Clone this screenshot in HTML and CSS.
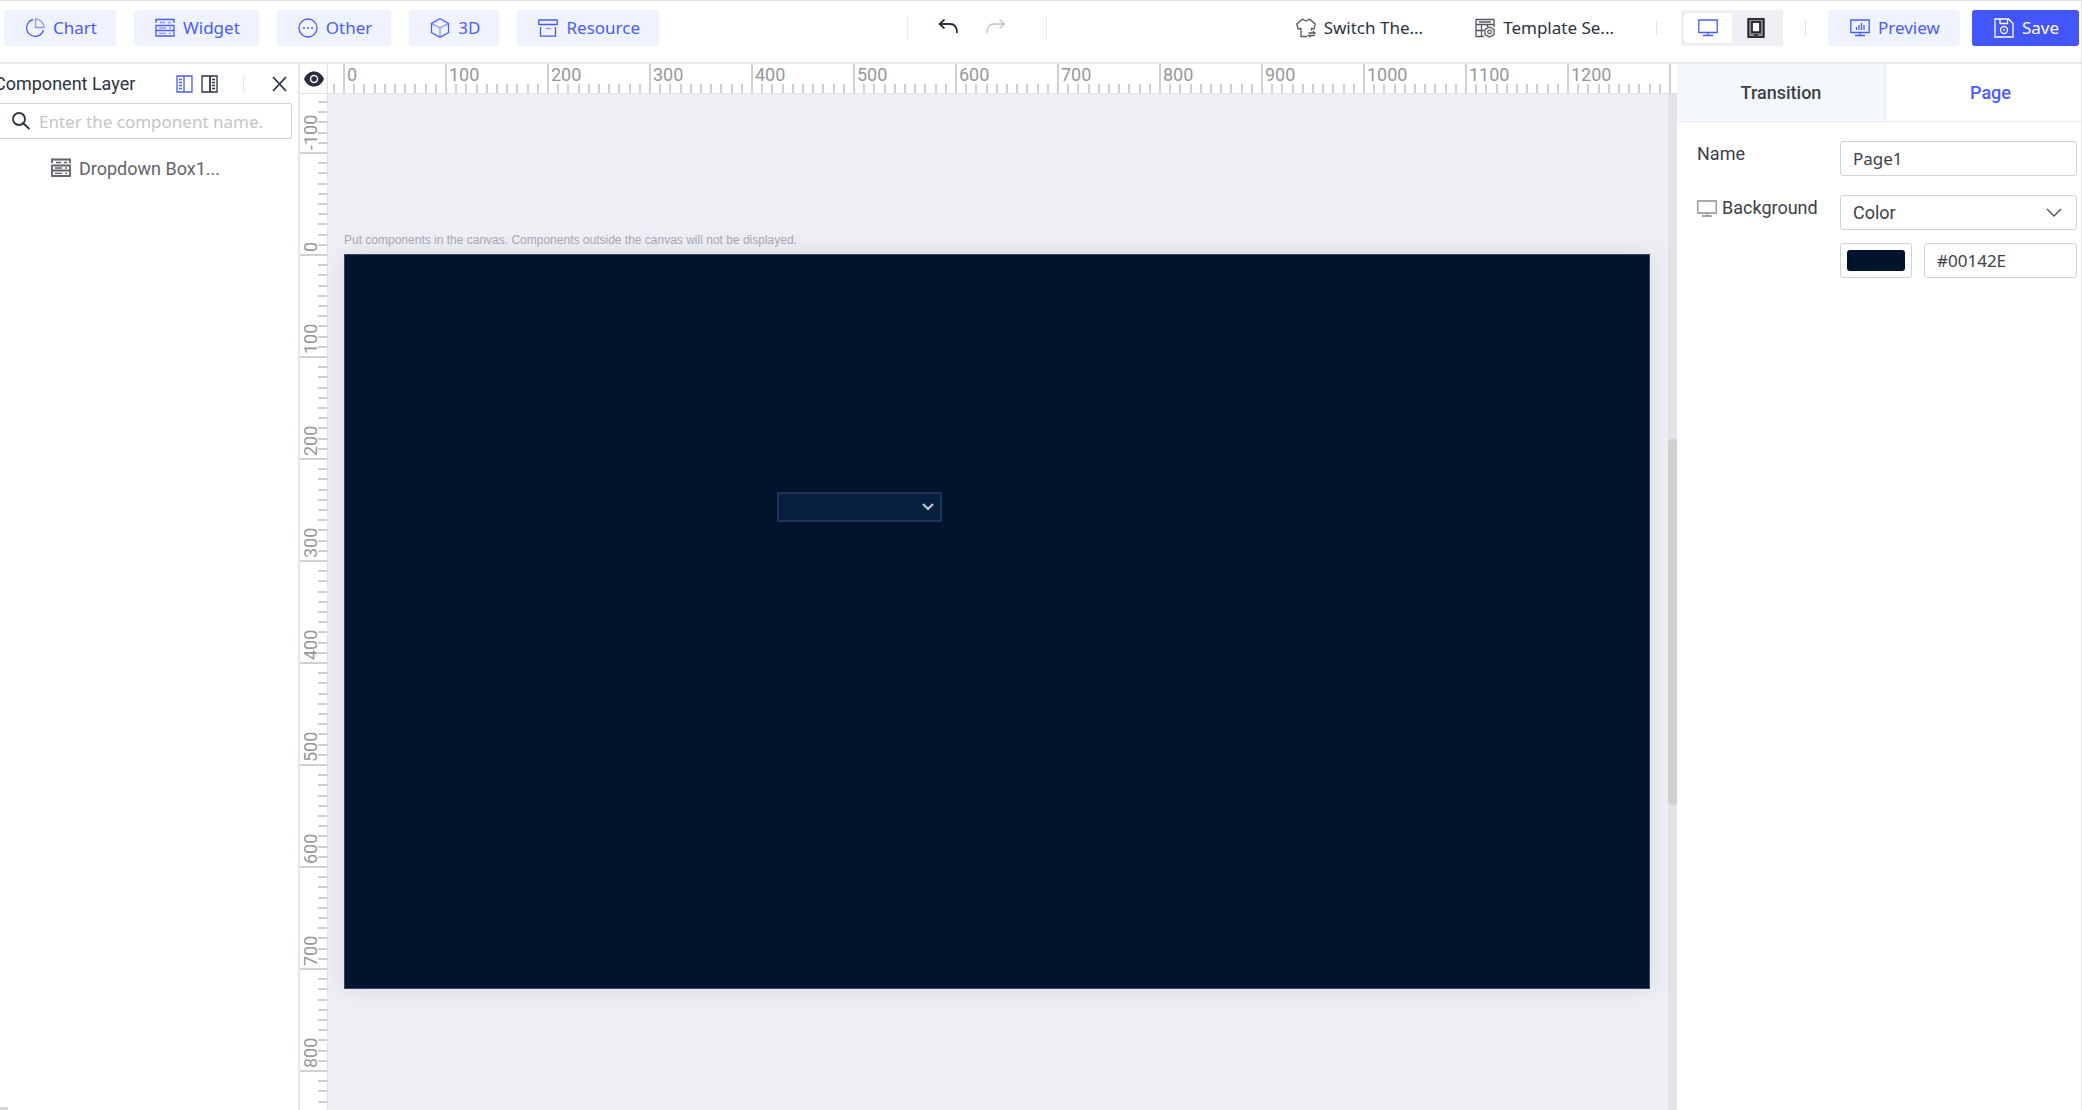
FILE: index.html
```html
<!DOCTYPE html>
<html lang="en">
<head>
  <meta charset="UTF-8">
  <meta name="viewport" content="width=device-width, initial-scale=1.0">
  <title>Page Editor</title>
  <link rel="stylesheet" href="styles.css">
</head>
<body>
  <header class="toolbar">
    <nav class="group component-menu">
      <button type="button" class="btn">
        <svg class="icon" viewBox="0 0 20 20"><path d="M8 1.500A8.600 8.600 0 1 0 18.500 12"/><path class="faint" d="M10.500 1v8.500H19A8.500 8.500 0 0 0 10.500 1z"/></svg>
        Chart
      </button>
      <button type="button" class="btn">
        <svg class="icon" viewBox="0 0 20 20"><path d="M1 5V1.500h18V5M1 7.500h18v5H1zM1 12.500h18v5.500H1z"/><path class="faint" d="M5 4.500h5M13 4.500h3M4 10h7M14 10h2M4 15.300h7M14 15.300h2"/></svg>
        Widget
      </button>
      <button type="button" class="btn">
        <svg class="icon" viewBox="0 0 20 20"><circle cx="10" cy="10" r="9"/><path d="M5 10h2M9 10h2M13 10h2"/></svg>
        Other
      </button>
      <button type="button" class="btn">
        <svg class="icon" viewBox="0 0 20 20"><path d="M10 .8l8.500 4.600v9.200L10 19.200l-8.500-4.600V5.400z"/><path class="faint" d="M2 5.800l8 4 8-4M10 9.800V19"/></svg>
        3D
      </button>
      <button type="button" class="btn">
        <svg class="icon" viewBox="0 0 20 20"><path d="M.8 2h18.400v4.500H.8zM2.500 9v9.200h15V9"/><path class="faint" d="M8 10.500h5"/></svg>
        Resource
      </button>
    </nav>

    <div class="group history">
      <button type="button" class="icon-btn" aria-label="Undo">
        <svg class="icon" viewBox="0 0 20 20"><path class="thick" d="M6.500 1.500L1.500 6l5 4.500M1.500 6H12c4.500 0 7 2.500 7 9"/></svg>
      </button>
      <button type="button" class="icon-btn" aria-label="Redo" disabled>
        <svg class="icon" viewBox="0 0 20 20"><path d="M13.500 1.500l5 4.500-5 4.500M18.500 6H8c-4.500 0-7 2.500-7 9"/></svg>
      </button>
    </div>

    <div class="group actions">
      <button type="button" class="text-btn">
        <svg class="icon" viewBox="0 0 20 20"><path d="M11 18.500H5V10.500L2 11 .8 6 6 1.500h1.500c1 1.800 4 1.800 5 0H14L19.200 6 18 11l-2.500-.5v2M12.500 15h6.500l-2-1.800M19 17.500h-6.500l2 1.800"/></svg>
        Switch The...
      </button>
      <button type="button" class="text-btn">
        <svg class="icon" viewBox="0 0 20 20"><path d="M9 18.500H1v-17h18V9M1 6.500h18M1 12.500h8M6.500 6.500v12M12.500 6.500V9M4 4h12M14.500 9l4.500 2.500v5L14.500 19 10 16.500v-5z"/><circle cx="14.500" cy="14" r="1.800"/></svg>
        Template Se...
      </button>
      <span class="divider"></span>
      <div class="device-switch">
        <button type="button" class="device active" aria-label="Desktop">
          <svg class="icon" viewBox="0 0 20 20"><path d="M.8 2h18.400v12.500H.8zM10 14.500V17M5 17.500h10"/></svg>
        </button>
        <button type="button" class="device" aria-label="Mobile">
          <svg class="icon" viewBox="0 0 20 20"><rect class="phone" x="2" y="0" width="16" height="20" rx="1"/><rect x="6" y="4" width="8" height="10" fill="#fff"/><path d="M2.500 1h15v18h-15zM6 4h8v10.500H6zM8 17h4"/></svg>
        </button>
      </div>
      <span class="divider"></span>
      <button type="button" class="btn">
        <svg class="icon" viewBox="0 0 20 20"><path d="M.8 2h18.400v12.500H.8zM10 14.500V17M5 17.500h10M6.500 9v3M9 7v5M11.500 5v7M14 7v5"/></svg>
        Preview
      </button>
      <button type="button" class="btn primary">
        <svg class="icon" viewBox="0 0 20 20"><path d="M1 1h13.500L19 5.500V19H1zM6 1v4.500h7.500V1"/><circle cx="10" cy="12" r="3.500"/><path d="M10 11v2"/></svg>
        Save
      </button>
    </div>
  </header>

  <main class="editor">
    <aside class="layers">
      <div class="layers-header">
        <h2>Component Layer</h2>
        <button type="button" class="icon-btn active" aria-label="Left layout">
          <svg class="icon small" viewBox="0 0 17 18"><path d="M1 1h15v16H1zM8 1v16M3 4.500h3M3 7.500h3M3 10.500h3M3 13.500h3"/></svg>
        </button>
        <button type="button" class="icon-btn" aria-label="Right layout">
          <svg class="icon small" viewBox="0 0 17 18"><path d="M1 1h15v16H1zM11 4.500h3M11 7.500h3M11 10.500h3M11 13.500h3"/><path class="thick" d="M9 1v16"/></svg>
        </button>
        <span class="divider"></span>
        <button type="button" class="icon-btn" aria-label="Close">
          <svg class="icon small" viewBox="0 0 17 18"><path class="thick" d="M2 2l13 14M15 2L2 16"/></svg>
        </button>
      </div>
      <label class="search">
        <svg class="icon" viewBox="0 0 20 20"><circle class="thick" cx="8" cy="8" r="6"/><path class="thick" d="M12.500 12.500L18.500 18"/></svg>
        <input type="text" aria-label="Component name" placeholder="Enter the component name.">
      </label>
      <ul class="layer-list">
        <li>
          <svg class="icon" viewBox="0 0 20 20"><path class="thick" d="M1 5V1.500h18V5M1 7.500h18v5H1zM1 12.500h18v5.500H1z"/><path d="M5 4.500h5M13 4.500h3M4 10h7M14 10h2M4 15.300h7M14 15.300h2"/></svg>
          Dropdown Box1...
        </li>
      </ul>
      <div class="layers-scroll"></div>
    </aside>

    <section class="workspace">
      <button type="button" class="corner" aria-label="Toggle rulers">
        <svg class="eye" viewBox="0 0 20 16"><path d="M0 8C4-2 16-2 20 8 16 18 4 18 0 8z" fill="#252c3d"/><circle cx="10" cy="8" r="3.500" fill="none" stroke="#fff" stroke-width="1.500"/></svg>
      </button>
      <div class="ruler-x">
        <span class="lead"></span>
        <span>0</span><span>100</span><span>200</span><span>300</span><span>400</span><span>500</span><span>600</span><span>700</span><span>800</span><span>900</span><span>1000</span><span>1100</span><span>1200</span><span></span>
      </div>
      <div class="ruler-y">
        <span class="lead">-100</span>
        <span>0</span><span>100</span><span>200</span><span>300</span><span>400</span><span>500</span><span>600</span><span>700</span><span>800</span><span></span>
      </div>
      <div class="canvas">
        <p class="hint">Put components in the canvas. Components outside the canvas will not be displayed.</p>
        <div class="stage">
          <select class="stage-select" aria-label="Dropdown Box1"><option></option></select>
          <svg class="stage-arrow" viewBox="0 0 12 8"><path d="M1 1l5 5 5-5"/></svg>
        </div>
      </div>
      <div class="scroll-track"><div class="scroll-thumb"></div></div>
    </section>

    <aside class="props">
      <div class="tabs">
        <button type="button" class="tab">Transition</button>
        <button type="button" class="tab active">Page</button>
      </div>
      <form class="props-form">
        <label for="page-name">Name</label>
        <input type="text" id="page-name" value="Page1">
        <label for="background">
          <svg class="icon" viewBox="0 0 20 20"><path d="M.8 3h18.400v12H.8zM10 15v2.500M5 18h10"/></svg>
          Background
        </label>
        <div class="select-wrap">
          <select id="background"><option>Color</option></select>
          <svg class="select-arrow" viewBox="0 0 16 10"><path d="M1 1l7 7 7-7"/></svg>
        </div>
        <div class="color-row">
          <input type="color" aria-label="Background color" value="#00142e">
          <input type="text" aria-label="Color code" value="#00142E">
        </div>
      </form>
    </aside>
  </main>
</body>
</html>
```
FILE: styles.css
```css
* {
  box-sizing: border-box;
}

body {
  margin: 0;
  height: 100vh;
  display: flex;
  flex-direction: column;
  overflow: hidden;
  font-family: Roboto, "Liberation Sans", sans-serif;
  font-size: 18px;
  color: #3c3f48;
  background: #fff;
  border-top: 1px solid #dfdfe6;
  border-right: 1px solid #e3e3e9;
}

button,
input,
select {
  font: inherit;
  color: inherit;
}

button {
  display: flex;
  align-items: center;
  justify-content: center;
  padding: 0;
  border: none;
  background: none;
  white-space: nowrap;
  cursor: pointer;
}

.icon {
  width: 20px;
  height: 20px;
  flex: none;
  fill: none;
  stroke: currentColor;
  stroke-width: 1.3;
}

.icon.small {
  width: 17px;
  height: 18px;
}

.thick {
  stroke-width: 1.8;
}

.faint {
  opacity: 0.6;
}

.divider {
  width: 1px;
  height: 16px;
  background: #e6e6ea;
}

/* Toolbar */
.toolbar {
  display: flex;
  align-items: center;
  height: 63px;
  flex: none;
  padding: 0 2px 8px 4px;
  border-bottom: 2px solid #e4e4ed;
  font-family: "Noto Sans", sans-serif;
  font-size: 17px;
}

.group {
  display: flex;
  align-items: center;
}

.component-menu {
  gap: 18px;
}

.btn {
  height: 36px;
  padding: 0 20px 0 22px;
  gap: 8px;
  border-radius: 3px;
  background: #eff3ff;
  color: #4a5cff;
}

.component-menu .btn {
  padding: 0 19px 0 21px;
}

.btn.primary {
  background: #4355ff;
  color: #fff;
}

.history {
  margin: 0 auto;
  height: 24px;
  padding: 0 40px 0 30px;
  gap: 28px;
  border-left: 1px solid #ececf0;
  border-right: 1px solid #ececf0;
}

.icon-btn {
  color: #2b3242;
}

.icon-btn:disabled {
  color: #c2c3c8;
}

.icon-btn.active {
  color: #4a5cff;
}

.text-btn {
  gap: 8px;
  margin-right: 52px;
  color: #2b3242;
}

.text-btn + .divider {
  margin-left: -10px;
}

.text-btn .icon {
  color: #55575f;
}

.device-switch {
  display: flex;
  margin: 0 22px 0 24px;
  padding: 3px;
  border-radius: 3px;
  background: #efeff4;
}

.device {
  width: 48px;
  height: 30px;
  border-radius: 3px;
  color: #22252e;
}

.device.active {
  background: #fff;
  color: #4a5cff;
}

.phone {
  fill: #85878c;
}

.actions .btn {
  margin-left: 12px;
}

.actions .divider + .btn {
  margin-left: 22px;
}

/* Layout */
.editor {
  flex: 1;
  min-height: 0;
  display: flex;
}

/* Component layer */
.layers {
  width: 300px;
  flex: none;
  display: flex;
  flex-direction: column;
  overflow: hidden;
  border-right: 2px solid #e6e6ee;
}

.layers-header {
  display: flex;
  align-items: center;
  gap: 8px;
  height: 39px;
  margin-left: -6px;
  padding-right: 10px;
}

.layers-header h2 {
  flex: 1;
  margin: 0;
  font-size: 18px;
  font-weight: 400;
  color: #2b3242;
  white-space: nowrap;
}

.layers-header .divider {
  margin: 0 19px 0 17px;
}

.search {
  display: flex;
  align-items: center;
  gap: 8px;
  height: 36px;
  margin-right: 6px;
  padding-left: 11px;
  border: 1px solid #d2d2d6;
  border-left: none;
  border-radius: 0 3px 3px 0;
  color: #2b3242;
}

.search input {
  flex: 1;
  min-width: 0;
  padding: 0;
  border: none;
  outline: none;
  background: none;
  font-family: "Noto Sans", sans-serif;
  font-size: 17px;
}

.search input::placeholder {
  color: #c4c5c9;
}

.layer-list {
  flex: 1;
  margin: 0;
  padding: 11px 0;
  list-style: none;
}

.layer-list li {
  display: flex;
  align-items: center;
  gap: 8px;
  height: 36px;
  padding-left: 51px;
  color: #62646b;
}

.layers-scroll {
  width: 8px;
  height: 3px;
  background: #d6d6d8;
}

/* Workspace with rulers, one ruler unit of 100 takes 102px */
.workspace {
  flex: 1;
  min-width: 0;
  display: grid;
  grid-template-columns: 28px 1fr 9px;
  grid-template-rows: 30px 1fr;
  overflow: hidden;
  background: #eff0f5;
}

.corner {
  border-right: 1px solid #e0e0e8;
  border-bottom: 1px solid #e0e0e8;
  background: #fff;
}

.eye {
  width: 20px;
  height: 16px;
}

.ruler-x,
.ruler-y {
  display: flex;
  background: #fff;
  color: #96979b;
}

.ruler-x {
  grid-column: 2 / 4;
  overflow: hidden;
  line-height: 21px;
  border-bottom: 1px solid #e0e0e8;
}

.ruler-x span {
  flex: 0 0 102px;
  padding-left: 4px;
  background-image:
    linear-gradient(#d0d0d3, #d0d0d3),
    repeating-linear-gradient(to right, #cfcfd2 0 2px, transparent 2px 10%);
  background-size: 2px 100%, 100% 9px;
  background-position: left top, left bottom;
  background-repeat: no-repeat;
}

.ruler-x .lead {
  flex-basis: 15px;
  background-image: linear-gradient(#cfcfd2, #cfcfd2);
  background-size: 2px 9px;
  background-position: 5px 100%;
}

.ruler-y {
  flex-direction: column;
  min-height: 0;
  border-right: 1px solid #e0e0e8;
}

/* Labels read upwards, so each segment is turned round */
.ruler-y span {
  flex: 0 0 102px;
  padding-top: 4px;
  writing-mode: vertical-rl;
  transform: rotate(180deg);
  line-height: 21px;
  background-image:
    linear-gradient(#d0d0d3, #d0d0d3),
    repeating-linear-gradient(to bottom, #cfcfd2 0 2px, transparent 2px 10%);
  background-size: 100% 2px, 9px 100%;
  background-position: left top, left top;
  background-repeat: no-repeat;
}

.ruler-y .lead {
  flex-basis: 60px;
  background-image:
    linear-gradient(#d0d0d3, #d0d0d3),
    repeating-linear-gradient(to bottom, #cfcfd2 0 2px, transparent 2px 17%);
}

.canvas {
  min-width: 0;
  overflow: hidden;
  padding: 136px 18px 0 16px;
}

.hint {
  margin: 0;
  height: 24px;
  line-height: 20px;
  font-family: "Liberation Sans", Arial, sans-serif;
  font-size: 12px;
  color: #a9aaae;
  white-space: nowrap;
}

.stage {
  position: relative;
  aspect-ratio: 16 / 9;
  background: #00142e;
  border: 1px solid #3a4560;
  box-shadow: 0 0 24px rgba(80, 85, 110, 0.15);
}

.stage-select {
  position: absolute;
  left: 432px;
  top: 237px;
  width: 165px;
  height: 30px;
  border: 2px solid #20324f;
  background: #08203f;
  appearance: none;
}

.stage-arrow {
  position: absolute;
  left: 577px;
  top: 248px;
  width: 12px;
  height: 8px;
  fill: none;
  stroke: #c3cad8;
  stroke-width: 2;
  pointer-events: none;
}

.scroll-track {
  padding-top: 345px;
  background: #e3e4e9;
}

.scroll-thumb {
  height: 366px;
  border-radius: 4px;
  background: #cfcfd1;
}

/* Page properties */
.props {
  width: 404px;
  flex: none;
}

.tabs {
  display: flex;
  height: 58px;
  border-bottom: 1px solid #e6ebf1;
}

.tab {
  flex: 1;
  font-weight: 500;
}

.tab:first-child {
  flex: none;
  width: 209px;
  border-right: 1px solid #e6ebf1;
  background: #f4f8fc;
}

.tab.active {
  padding-left: 14px;
  color: #4a5cff;
}

.props-form {
  display: grid;
  grid-template-columns: 143px 1fr;
  padding: 19px 4px 0 20px;
}

.props-form > label {
  display: flex;
  gap: 5px;
  height: 54px;
  line-height: 26px;
}

.props-form > label .icon {
  margin-top: 3px;
  color: #8c8e94;
}

.props-form input,
.props-form select {
  width: 100%;
  height: 35px;
  padding: 0 12px;
  border: 1px solid #d2d2d6;
  border-radius: 3px;
  background: #fff;
}

.props-form input {
  font-family: "Noto Sans", sans-serif;
  font-size: 17px;
}

.select-wrap {
  position: relative;
}

.select-wrap select {
  appearance: none;
}

.select-arrow {
  position: absolute;
  right: 15px;
  top: 13px;
  width: 16px;
  height: 10px;
  fill: none;
  stroke: #55575f;
  stroke-width: 1.5;
  pointer-events: none;
}

.color-row {
  grid-column: 2;
  display: grid;
  grid-template-columns: 72px 1fr;
  gap: 12px;
  margin-top: -6px;
}

.color-row input[type="color"] {
  padding: 6px;
}

.color-row input::-webkit-color-swatch-wrapper {
  padding: 0;
}

.color-row input::-webkit-color-swatch {
  border: none;
  border-radius: 3px;
}
```
